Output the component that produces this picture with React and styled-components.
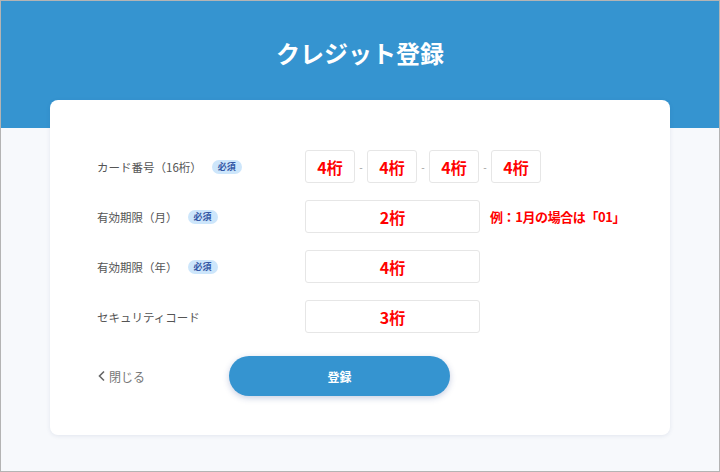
import styled, { createGlobalStyle } from 'styled-components';

const GlobalStyle = createGlobalStyle`
  html, body {
    margin: 0;
    padding: 0;
  }
  body {
    font-family: "Noto Sans CJK JP", "Noto Sans", sans-serif;
  }
`;

const rows = [
  { label: 'カード番号（16桁）', required: true, fields: ['4桁', '4桁', '4桁', '4桁'] },
  { label: '有効期限（月）', required: true, fields: ['2桁'], note: '例：1月の場合は「01」' },
  { label: '有効期限（年）', required: true, fields: ['4桁'] },
  { label: 'セキュリティコード', required: false, fields: ['3桁'] },
];

export default function App() {
  return (
    <>
      <GlobalStyle />
      <Page>
        <Title>クレジット登録</Title>
        <Card>
          <Form>
            {rows.map((row) => (
              <Row key={row.label}>
                <Label>
                  {row.label}
                  {row.required && <Badge>必須</Badge>}
                </Label>
                <Fields>
                  {row.fields.map((f, i) => (
                    <FieldGroup key={i}>
                      {i > 0 && <Dash>-</Dash>}
                      <Input $wide={row.fields.length === 1}>{f}</Input>
                    </FieldGroup>
                  ))}
                  {row.note && <Note>{row.note}</Note>}
                </Fields>
              </Row>
            ))}
          </Form>
          <Footer>
            <CloseLink>
              <svg width="9" height="12" viewBox="0 0 9 12">
                <path d="M7 1.5 L2.5 6 L7 10.5" fill="none" stroke="#666" strokeWidth="1.6" />
              </svg>
              閉じる
            </CloseLink>
            <SubmitButton>登録</SubmitButton>
          </Footer>
        </Card>
      </Page>
    </>
  );
}

const Page = styled.div`
  width: 720px;
  height: 472px;
  box-sizing: border-box;
  border: 1px solid #b4b4b4;
  background: linear-gradient(#3594d0 0 127px, #f7f9fc 127px);
  overflow: hidden;
`;

const Title = styled.h1`
  margin: 0;
  padding-top: 37px;
  height: 30px;
  line-height: 30px;
  text-align: center;
  color: #fff;
  font-size: 24px;
  font-weight: 700;
`;

const Card = styled.div`
  margin: 32px 49px 0;
  height: 335px;
  box-sizing: border-box;
  padding: 50px 0 0 47px;
  background: #fff;
  border-radius: 8px;
  box-shadow: 0 1px 4px rgba(40, 60, 120, 0.1);
`;

const Form = styled.div`
  display: flex;
  flex-direction: column;
  gap: 17px;
`;

const Row = styled.div`
  display: grid;
  grid-template-columns: 208px auto;
  align-items: center;
  height: 33px;
`;

const Label = styled.div`
  display: flex;
  align-items: center;
  font-size: 11.5px;
  color: #555;
  gap: 10px;
`;

const Badge = styled.span`
  display: inline-flex;
  align-items: center;
  justify-content: center;
  width: 30px;
  height: 14px;
  border-radius: 7px;
  background: #cde6fb;
  color: #3558a6;
  font-size: 9px;
  font-weight: 700;
`;

const Fields = styled.div`
  display: flex;
  align-items: center;
`;

const FieldGroup = styled.div`
  display: flex;
  align-items: center;
`;

const Dash = styled.span`
  width: 12px;
  text-align: center;
  font-size: 10px;
  color: #999;
`;

const Input = styled.div`
  width: ${(p) => (p.$wide ? '175px' : '50px')};
  height: 33px;
  box-sizing: border-box;
  border: 1px solid #e6e6e6;
  border-radius: 3px;
  display: flex;
  align-items: center;
  justify-content: center;
  color: #ff0000;
  font-size: 16px;
  font-weight: 700;
`;

const Note = styled.span`
  margin-left: 10px;
  color: #ff0000;
  font-size: 13px;
  letter-spacing: -0.4px;
  font-weight: 700;
`;

const Footer = styled.div`
  display: grid;
  grid-template-columns: 132px 221px;
  align-items: center;
  margin-top: 23px;
`;

const CloseLink = styled.button`
  display: flex;
  align-items: center;
  gap: 3px;
  padding: 0;
  border: none;
  background: none;
  font-family: inherit;
  font-size: 12px;
  color: #777;
  cursor: pointer;
`;

const SubmitButton = styled.button`
  height: 40px;
  border: none;
  border-radius: 20px;
  background: #3594d0;
  color: #fff;
  font-family: inherit;
  font-size: 12px;
  font-weight: 700;
  box-shadow: 0 2px 6px rgba(30, 60, 140, 0.25);
  cursor: pointer;
`;
